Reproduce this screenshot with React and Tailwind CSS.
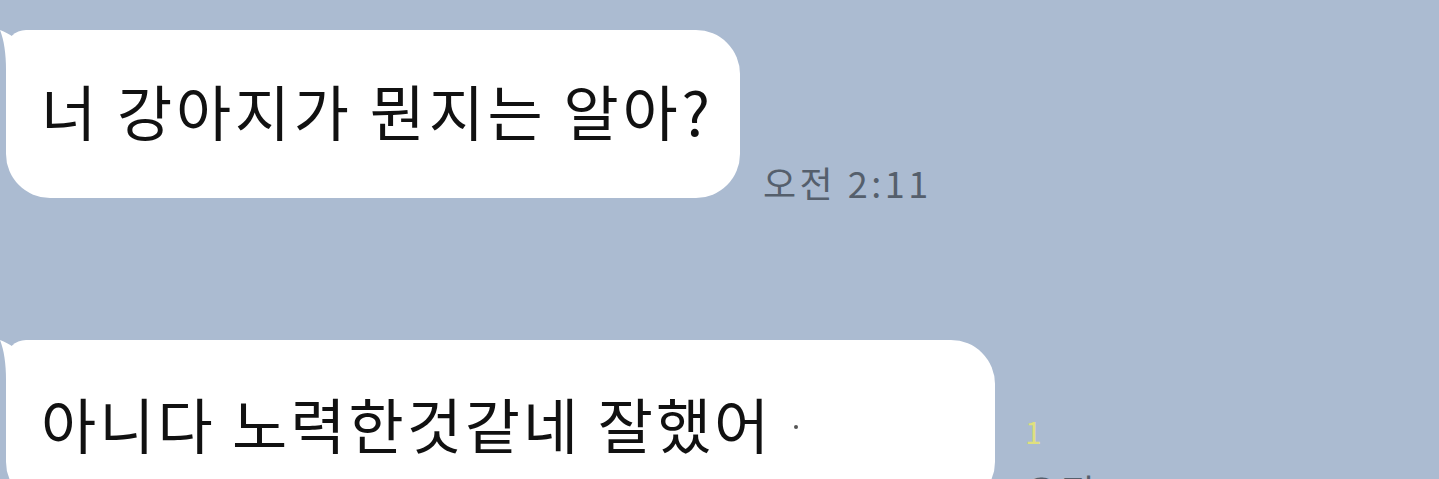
const font = { fontFamily: '"Noto Sans CJK KR", "Noto Sans", sans-serif' };

function Tail() {
    return (
        <svg className="absolute -left-[6px] top-0" width="34" height="40" viewBox="0 0 34 40">
            <path d="M0 0 C10 4 18 10 22 13 L34 0 L34 40 L6 40 C6 24 4 10 0 0 Z" fill="#ffffff" />
        </svg>
    );
}

function Bubble({text, width, height, tracking, shift, children}) {
    return (
        <div
            className="relative shrink-0 bg-white rounded-[44px] rounded-tl-[20px] flex items-center pl-[35px]"
            style={{width, height}}
        >
            <Tail />
            <span
                className="relative text-[60px] leading-none text-[#111111]"
                style={{...font, letterSpacing: tracking, top: shift}}
            >
                {text}
            </span>
            {children}
        </div>
    );
}

export default function App() {
    return (
        <div className="h-[479px] w-full overflow-hidden bg-[#abbbd1]" style={font}>
            <div className="flex flex-col pt-[30px] pl-[6px] gap-[142px]">
                <div className="flex items-end">
                    <Bubble text="너 강아지가 뭔지는 알아?" width={734} height={168} tracking="3.7px" shift={-4} />
                    <div className="ml-[23px] mb-[-4px] text-[36px] leading-[40px] tracking-[3.5px] text-[#555f6c]">
                        오전 2:11
                    </div>
                </div>

                <div className="flex items-end">
                    <Bubble text="아니다 노력한것같네 잘했어" width={989} height={166} tracking="3px" shift={0}>
                        <span className="relative ml-[22px] mt-[8px] w-[4px] h-[4px] rounded-full bg-[#555]" />
                    </Bubble>
                    <div className="ml-[30px] flex flex-col mb-[-4px]">
                        <span className="text-[30px] leading-[30px] text-[#dfe07e]">1</span>
                        <span className="mt-[24px] text-[36px] leading-[40px] tracking-[3.5px] text-[#555f6c]">오전 2:15</span>
                    </div>
                </div>
            </div>
        </div>
    );
}
